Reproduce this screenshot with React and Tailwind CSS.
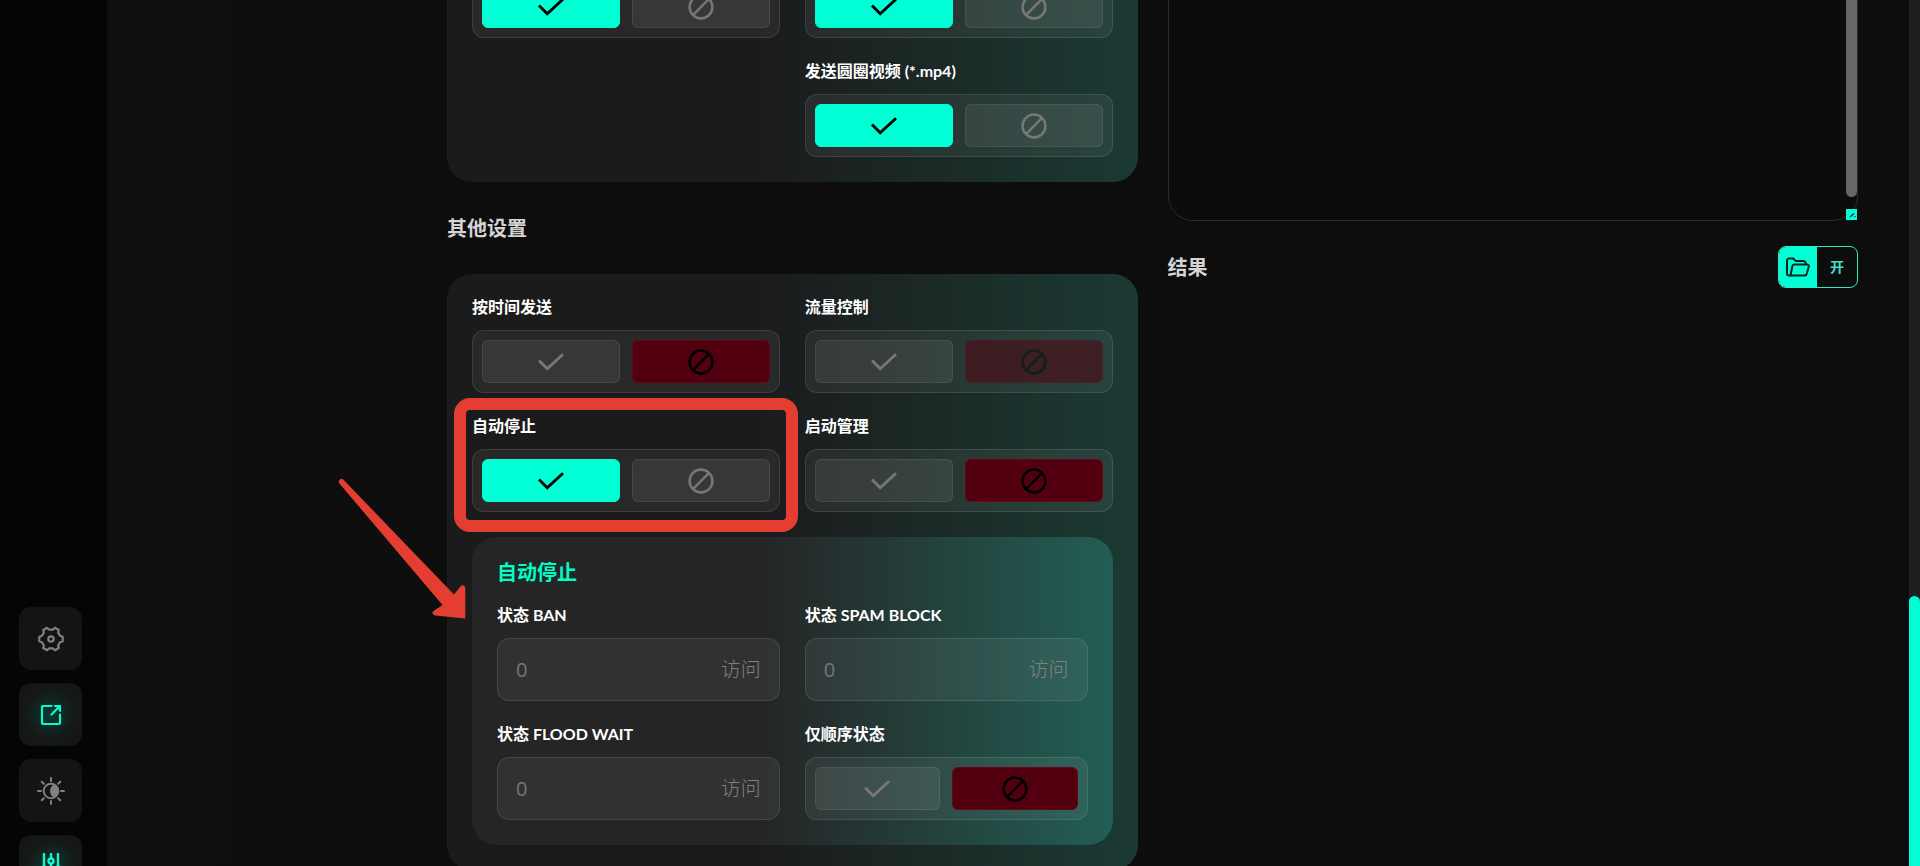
import React, { useState } from "react";
import clsx from "clsx";

const CheckIcon = () => (
  <svg width="26" height="18" viewBox="0 0 26 18" fill="none" stroke="currentColor" strokeWidth="2.9">
    <path d="M1 7.4 9.2 15.8 25 1.2" />
  </svg>
);

const BanIcon = () => (
  <svg width="26" height="26" viewBox="0 0 26 26" fill="none" stroke="currentColor" strokeWidth="2.5">
    <circle cx="13" cy="13" r="11.4" />
    <path d="M5.2 20.8 20.8 5.2" />
  </svg>
);

const GearIcon = () => (
  <svg width="28" height="28" viewBox="-14 -14 28 28" fill="none" stroke="currentColor" strokeWidth="2.2" strokeLinejoin="round">
    <path d="M11.7-2.2V2.2L9 3.2 7.2 6.4 7.75 9 3.95 11.2 1.8 9.4H-1.8L-3.95 11.2-7.75 9-7.2 6.4-9 3.2-11.7 2.2V-2.2L-9-3.2-7.2-6.4-7.75-9-3.95-11.2-1.8-9.4H1.8L3.95-11.2 7.75-9 7.2-6.4 9-3.2Z" />
    <circle r="2.7" />
  </svg>
);

const ShareIcon = () => (
  <svg width="22" height="22" viewBox="0 0 22 22" fill="none" stroke="currentColor" strokeWidth="2.2" strokeLinecap="round" strokeLinejoin="round">
    <path d="M11.5 2H3a1 1 0 0 0-1 1v16a1 1 0 0 0 1 1h16a1 1 0 0 0 1-1v-8.500" />
    <path d="M11.5 10.500 19 3M15 2h5v5" />
    <path d="M15 2h5v5Z" fill="currentColor" stroke="none" />
  </svg>
);

const SunIcon = () => (
  <svg width="28" height="28" viewBox="-14 -14 28 28" fill="none" stroke="currentColor" strokeWidth="2" strokeLinecap="round">
    <circle r="7.3" />
    <path d="M3-6.600A7 7 0 0 1 3 6.600C-2.200 4.200-2.200-4.200 3-6.600Z" fill="currentColor" stroke="none" />
    <path d="M0-13v3M0 10v3M-13 0h3M10 0h3M-9.300-9.300-7.200-7.200M7.200 7.200 9.300 9.300M-9.300 9.300-7.200 7.200M7.200-7.200 9.300-9.300" />
  </svg>
);

const SlidersIcon = () => (
  <svg width="22" height="28" viewBox="0 1 22 28" fill="none" stroke="currentColor" strokeWidth="2.4" strokeLinecap="round">
    <path d="M4 2v12M18 2v12M11 2v4M11 12v14M4 20v6M18 20v6" />
    <circle cx="11" cy="9" r="2.500" />
    <circle cx="4" cy="17" r="2.500" />
    <circle cx="18" cy="17" r="2.500" />
  </svg>
);

const FolderIcon = () => (
  <svg width="24" height="20" viewBox="0 0 24 20" fill="none" stroke="currentColor" strokeWidth="2" strokeLinecap="round" strokeLinejoin="round">
    <path d="M4.500 18.500H3a2 2 0 0 1-2-2v-13a2 2 0 0 1 2-2h4.200l2.600 2.600h7.700a2.200 2.200 0 0 1 2.200 2.300" />
    <path d="M8.200 7.500h13c1.100 0 1.900 1 1.600 2l-2.100 7.500a2 2 0 0 1-1.900 1.500H4.500L6.400 9a2 2 0 0 1 1.800-1.500Z" />
  </svg>
);

const navItems = [
  { id: "settings", Icon: GearIcon, active: false },
  { id: "share", Icon: ShareIcon, active: true },
  { id: "theme", Icon: SunIcon, active: false },
  { id: "filters", Icon: SlidersIcon, active: true },
];

const Toggle = ({ label, initial, disabled }) => {
  const [on, setOn] = useState(initial);

  return (
    <div
      role="group"
      aria-label={label}
      className="grid h-[63px] grid-cols-2 gap-3 rounded-xl border border-white/10 bg-white/6 p-[9px]"
    >
      <button
        type="button"
        aria-label="✓"
        aria-pressed={on}
        disabled={disabled}
        onClick={() => setOn(true)}
        className={clsx(
          "flex items-center justify-center rounded-md border",
          on ? "border-[#00ffd4] bg-[#00ffd4] text-black" : "border-white/8 bg-white/7 text-[#777777]"
        )}
      >
        <CheckIcon />
      </button>
      <button
        type="button"
        aria-label="⊘"
        aria-pressed={!on}
        disabled={disabled}
        onClick={() => setOn(false)}
        className={clsx(
          "flex items-center justify-center rounded-md border",
          on ? "border-white/8 bg-white/7 text-[#777777]" : "border-[#6a0518] bg-[#52000f] text-black",
          disabled && "opacity-50"
        )}
      >
        <BanIcon />
      </button>
    </div>
  );
};

const ToggleField = ({ label, initial = false, disabled = false, children }) => (
  <div className="relative">
    {label && <div className="mb-[15px] text-base leading-4 font-bold text-white">{label}</div>}
    <Toggle label={label} initial={initial} disabled={disabled} />
    {children}
  </div>
);

const NumberField = ({ id, label }) => (
  <div>
    <label htmlFor={id} className="mb-[15px] block text-base leading-4 font-bold text-white">
      {label}
    </label>
    <div className="flex h-[63px] items-center rounded-xl border border-white/10 bg-white/6 px-[18px] font-['Open_Sans','Noto_Sans_CJK_SC',sans-serif] text-xl">
      <input
        id={id}
        type="text"
        placeholder="0"
        className="min-w-0 flex-1 bg-transparent outline-none placeholder:text-[#777777]"
      />
      <span className="font-light text-[#808080]">访问</span>
    </div>
  </div>
);

// red frame and arrow that point at the auto stop option
const Highlight = () => (
  <>
    <div className="pointer-events-none absolute -inset-x-[18px] -inset-y-5 rounded-2xl border-[12px] border-[#e43d31]" />
    <svg className="pointer-events-none absolute -left-[152px] top-[42px]" width="170" height="180" viewBox="0 0 170 180">
      <path
        d="M23.500 19.800 134 134.500 140.500 126.500Q143 124 145.300 127V158.600L115 155.500Q110.500 153.500 113.500 151L122.500 145 19.200 23.300Q18 20 20.500 19Q22.200 18.500 23.500 19.800Z"
        fill="#e43d31"
      />
    </svg>
  </>
);

const Sidebar = () => (
  <nav className="flex w-[107px] shrink-0 flex-col justify-end bg-[#050505] pl-[19px]">
    <div className="-mb-8 flex flex-col gap-[13px]">
      {navItems.map(({ id, Icon, active }) => (
        <button
          key={id}
          type="button"
          aria-label={id}
          className={clsx(
            "flex size-[63px] items-center justify-center rounded-xl",
            active
              ? "bg-[radial-gradient(circle,#0a3a31_0%,#151918_55%,#141515_100%)] text-[#13f5cd]"
              : "bg-[#141414] text-[#808080]"
          )}
        >
          <Icon />
        </button>
      ))}
    </div>
  </nav>
);

const App = () => {
  return (
    <div className="flex h-screen overflow-hidden bg-[#0d0d0e] font-['Lato','Noto_Sans_CJK_SC',sans-serif] text-white">
      <Sidebar />

      <main className="min-w-0 flex-1 overflow-hidden bg-[linear-gradient(90deg,#0f0f0f,#0d0d0e_20%)] pr-[51px] pl-[340px]">
        <div className="-mt-[50px] grid grid-cols-2 gap-[30px]">
          <div>
            <section className="grid grid-cols-2 gap-[25px] rounded-b-[25px] bg-[linear-gradient(90deg,#1b1b1c_45%,#1b3a33)] p-[25px]">
              <ToggleField initial={true} />
              <ToggleField initial={true} />
              <div className="col-start-2">
                <ToggleField label="发送圆圈视频 (*.mp4)" initial={true} />
              </div>
            </section>

            <h2 className="py-8 text-xl leading-7 font-bold text-[#d4d4d4]">其他设置</h2>

            <section className="grid grid-cols-2 gap-[25px] rounded-[25px] bg-[linear-gradient(90deg,#1b1b1c_45%,#1b3a33)] p-[25px]">
              <ToggleField label="按时间发送" />
              <ToggleField label="流量控制" disabled />
              <ToggleField label="自动停止" initial={true}>
                <Highlight />
              </ToggleField>
              <ToggleField label="启动管理" />

              <div className="col-span-2 grid grid-cols-2 gap-[25px] rounded-[25px] bg-[linear-gradient(90deg,#252526_45%,#225e54)] p-[25px]">
                <h3 className="col-span-2 text-xl leading-5 font-bold text-[#00ffc8]">自动停止</h3>
                <NumberField id="ban" label="状态 BAN" />
                <NumberField id="spam" label="状态 SPAM BLOCK" />
                <NumberField id="flood" label="状态 FLOOD WAIT" />
                <ToggleField label="仅顺序状态" />
              </div>
            </section>
          </div>

          <div>
            <div className="relative">
              <textarea
                aria-label="log"
                className="block h-[271px] w-full resize-none rounded-[25px] border border-[#2c2c2d] bg-[#0c0d0b] p-6 outline-none"
              />
              <div className="absolute top-0 right-px h-[247px] w-[11px] rounded-full bg-[#676767]" />
              <div className="absolute right-px bottom-px size-[11px] bg-[#00ffd4]">
                <svg width="11" height="11" viewBox="0 0 11 11" fill="none" stroke="#0b4a3e" strokeWidth="1.5">
                  <path d="M4 8 8 4.500M9 7v1" />
                </svg>
              </div>
            </div>

            <div className="mt-[25px] flex items-center justify-between">
              <h2 className="text-xl leading-7 font-bold text-[#d4d4d4]">结果</h2>
              <button
                type="button"
                className="flex h-[42px] w-20 overflow-hidden rounded-lg border border-[#2fe8c4]"
              >
                <span className="flex h-full w-[38px] items-center justify-center bg-[#00ffd4] text-[#06261f]">
                  <FolderIcon />
                </span>
                <span className="flex h-full flex-1 items-center justify-center text-sm font-bold text-[#3fe3c4]">
                  开
                </span>
              </button>
            </div>
          </div>
        </div>
      </main>

      {/* page scrollbar */}
      <div className="flex w-[11px] shrink-0 flex-col justify-end bg-[#1f1f20]">
        <div className="h-[270px] rounded-t-full bg-[#00ffd4]" />
      </div>
    </div>
  );
};

export default App;
